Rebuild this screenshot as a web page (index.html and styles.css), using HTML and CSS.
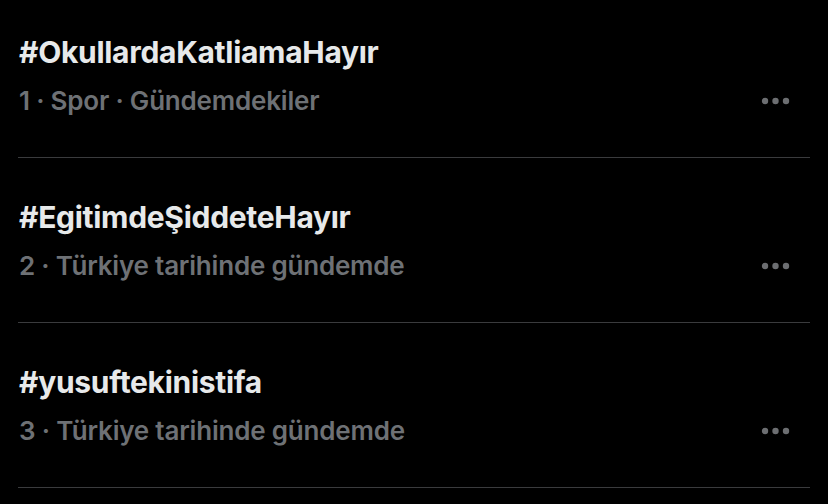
FILE: index.html
```html
<!DOCTYPE html>
<html lang="tr">
<head>
<meta charset="utf-8">
<link rel="stylesheet" href="styles.css">
</head>
<body>
<ul class="trends">
  <li class="trend">
    <div class="title">#OkullardaKatliamaHayır</div>
    <div class="meta-row">
      <span class="meta">1 · Spor · Gündemdekiler</span>
      <svg class="more" width="30" height="8" viewBox="0 0 30 8"><circle cx="4" cy="4" r="3.2"/><circle cx="14.5" cy="4" r="3.2"/><circle cx="25" cy="4" r="3.2"/></svg>
    </div>
  </li>
  <li class="trend">
    <div class="title">#EgitimdeŞiddeteHayır</div>
    <div class="meta-row">
      <span class="meta">2 · Türkiye tarihinde gündemde</span>
      <svg class="more" width="30" height="8" viewBox="0 0 30 8"><circle cx="4" cy="4" r="3.2"/><circle cx="14.5" cy="4" r="3.2"/><circle cx="25" cy="4" r="3.2"/></svg>
    </div>
  </li>
  <li class="trend">
    <div class="title">#yusuftekinistifa</div>
    <div class="meta-row">
      <span class="meta">3 · Türkiye tarihinde gündemde</span>
      <svg class="more" width="30" height="8" viewBox="0 0 30 8"><circle cx="4" cy="4" r="3.2"/><circle cx="14.5" cy="4" r="3.2"/><circle cx="25" cy="4" r="3.2"/></svg>
    </div>
  </li>
</ul>
</body>
</html>
```

FILE: styles.css
```css
html, body {
  margin: 0;
  padding: 0;
  background: #000;
}
body {
  font-family: Inter, "Noto Sans", "Liberation Sans", sans-serif;
  width: 828px;
  height: 504px;
  overflow: hidden;
}
.trends {
  list-style: none;
  margin: 0;
  padding: 0 18px;
}
.trend {
  padding: 41px 0 40px 1px;
  border-bottom: 1px solid #3a3b3d;
}
.trend:first-child {
  padding-top: 34px;
}
.title {
  color: #e7e9ea;
  font-size: 30px;
  font-weight: 700;
  line-height: 36px;
  letter-spacing: -0.3px;
}
.meta-row {
  display: flex;
  align-items: center;
  justify-content: space-between;
  margin-top: 15px;
  height: 32px;
  padding-right: 19px;
}
.meta {
  color: #6e7175;
  font-size: 26px;
  font-weight: 600;
  line-height: 32px;
  letter-spacing: -0.2px;
}
.more {
  fill: #6c6e71;
  display: block;
}
```
